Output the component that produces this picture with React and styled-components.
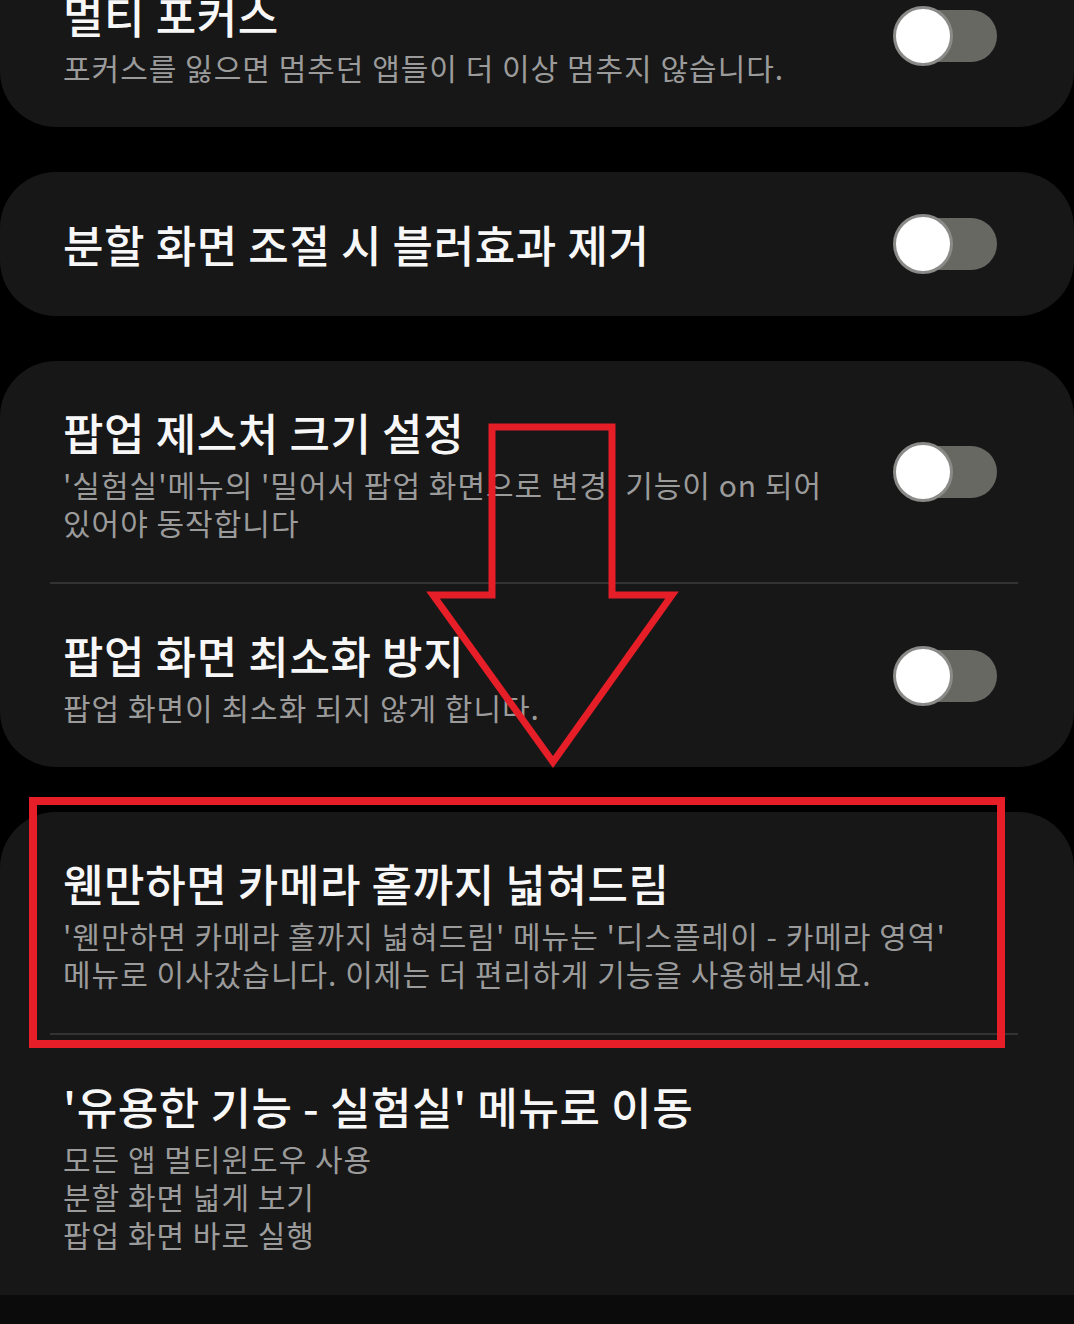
import React from "react";
import styled, { createGlobalStyle } from "styled-components";

const GlobalStyle = createGlobalStyle`
  html, body {
    margin: 0;
    padding: 0;
    background: #000;
  }
  body {
    font-family: "Noto Sans CJK KR", "Noto Sans", sans-serif;
  }
`;

const sections = [
  {
    rows: [
      {
        title: "멀티 포커스",
        lines: ["포커스를 잃으면 멈추던 앱들이 더 이상 멈추지 않습니다."],
        toggle: true,
      },
    ],
  },
  {
    rows: [{ title: "분할 화면 조절 시 블러효과 제거", lines: [], toggle: true }],
  },
  {
    rows: [
      {
        title: "팝업 제스처 크기 설정",
        lines: [
          "'실험실'메뉴의 '밀어서 팝업 화면으로 변경' 기능이 on 되어",
          "있어야 동작합니다",
        ],
        toggle: true,
      },
      {
        title: "팝업 화면 최소화 방지",
        lines: ["팝업 화면이 최소화 되지 않게 합니다."],
        toggle: true,
      },
    ],
  },
  {
    rows: [
      {
        title: "웬만하면 카메라 홀까지 넓혀드림",
        lines: [
          "'웬만하면 카메라 홀까지 넓혀드림' 메뉴는 '디스플레이 - 카메라 영역'",
          "메뉴로 이사갔습니다. 이제는 더 편리하게 기능을 사용해보세요.",
        ],
      },
      {
        title: "'유용한 기능 - 실험실' 메뉴로 이동",
        lines: ["모든 앱 멀티윈도우 사용", "분할 화면 넓게 보기", "팝업 화면 바로 실행"],
      },
    ],
  },
];

function App() {
  return (
    <Screen>
      <GlobalStyle />
      <List>
        {sections.map((section, i) => (
          <Card key={i} $first={i === 0} $last={i === sections.length - 1}>
            {section.rows.map((row, j) => (
              <React.Fragment key={j}>
                {j > 0 && <Divider />}
                <Row>
                  <TextBlock>
                    <Title>{row.title}</Title>
                    {row.lines.length > 0 && (
                      <Summary>
                        {row.lines.map((line, k) => (
                          <Line key={k}>{line}</Line>
                        ))}
                      </Summary>
                    )}
                  </TextBlock>
                  {row.toggle && (
                    <Switch>
                      <Track />
                      <Thumb />
                    </Switch>
                  )}
                </Row>
              </React.Fragment>
            ))}
          </Card>
        ))}
      </List>
      <NavBar />
      {/* red highlight box and arrow drawn over the list */}
      <Markup viewBox="0 0 1074 1324" width="1074" height="1324">
        <rect
          x="33"
          y="801"
          width="968"
          height="243"
          fill="none"
          stroke="#e61e28"
          strokeWidth="8"
        />
        <polygon
          points="492,427 612,427 612,595 672,595 553,762 433,595 492,595"
          fill="none"
          stroke="#e61e28"
          strokeWidth="7"
          strokeLinejoin="miter"
        />
      </Markup>
    </Screen>
  );
}

export default App;

const Screen = styled.div`
  position: relative;
  width: 1074px;
  height: 1324px;
  overflow: hidden;
  background: #000;
  display: flex;
  flex-direction: column;
`;

const List = styled.div`
  flex: 1;
  overflow: hidden;
  display: flex;
  flex-direction: column;
  gap: 45px;
`;

const Card = styled.div`
  background: #171717;
  border-radius: 56px;
  margin-top: ${(p) => (p.$first ? "-56px" : "0")};
  padding-bottom: ${(p) => (p.$last ? "80px" : "0")};
  flex-shrink: 0;
`;

const Row = styled.div`
  display: flex;
  align-items: center;
  justify-content: space-between;
  padding: 41px 77px 41px 63px;
`;

const TextBlock = styled.div`
  display: flex;
  flex-direction: column;
`;

const Title = styled.div`
  color: #f7f7f7;
  font-size: 44px;
  font-weight: 500;
  line-height: 60px;
  letter-spacing: 0.6px;
  white-space: nowrap;
`;

const Summary = styled.div`
  margin-top: 3px;
  color: #9b9b9b;
  font-size: 30px;
  line-height: 38px;
  letter-spacing: 1px;
`;

const Line = styled.div`
  white-space: nowrap;
`;

const Divider = styled.div`
  height: 2px;
  margin: 0 56px 0 50px;
  background: #333333;
`;

const Switch = styled.div`
  position: relative;
  width: 104px;
  height: 62px;
  flex-shrink: 0;
`;

const Track = styled.div`
  position: absolute;
  left: 2px;
  top: 5px;
  width: 102px;
  height: 52px;
  border-radius: 26px;
  background: #686862;
`;

const Thumb = styled.div`
  position: absolute;
  left: 0;
  top: 1px;
  width: 54px;
  height: 54px;
  border-radius: 50%;
  background: #fff;
  border: 3px solid #8a8a88;
`;

const NavBar = styled.div`
  height: 29px;
  flex-shrink: 0;
  background: #0b0b0b;
`;

const Markup = styled.svg`
  position: absolute;
  top: 0;
  left: 0;
  pointer-events: none;
`;
